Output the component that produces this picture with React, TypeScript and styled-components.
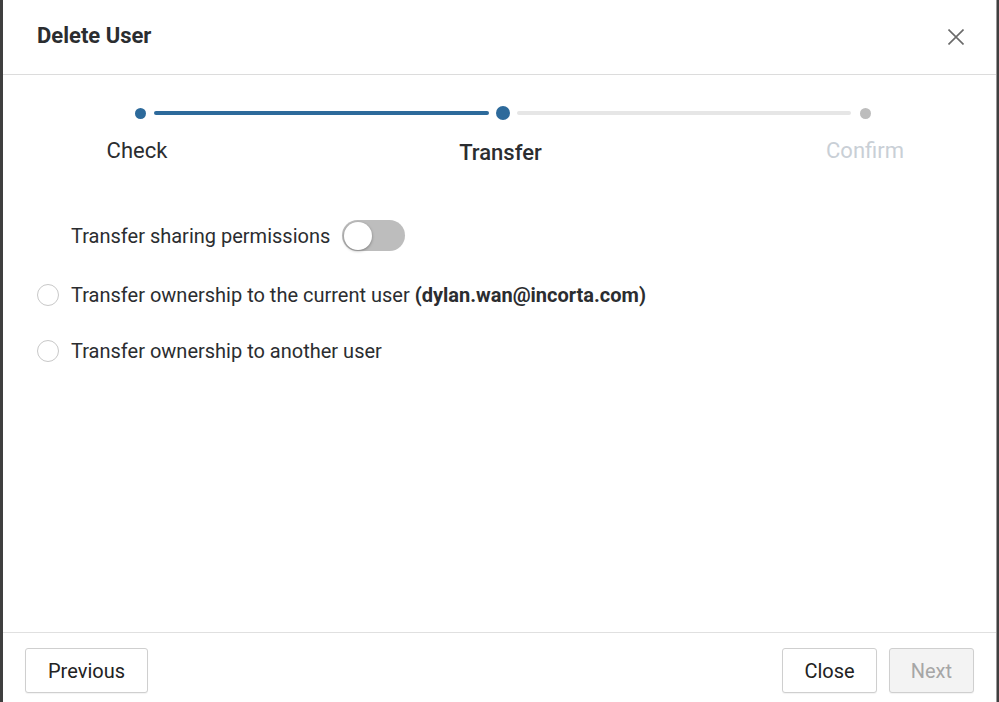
import styled, { createGlobalStyle, css } from 'styled-components'

const GlobalStyle = createGlobalStyle`
  html, body {
    margin: 0;
    padding: 0;
    height: 100%;
    background: #3f3f3f;
    font-family: Roboto, "Noto Sans", Arial, sans-serif;
    color: #2b2d30;
  }
  #root {
    height: 100%;
  }
`

const steps = [
  { label: 'Check', state: 'done' },
  { label: 'Transfer', state: 'active' },
  { label: 'Confirm', state: 'todo' },
]

export default function App() {
  return (
    <>
      <GlobalStyle />
      <Overlay>
        <Modal>
          <Header>
            <Title>Delete User</Title>
            <CloseIcon />
          </Header>

          <Body>
            <Stepper>
              {steps.map((step, i) => (
                <StepGroup key={step.label} $grow={i > 0}>
                  {i > 0 && <Connector $done={step.state !== 'todo'} />}
                  <Step>
                    <Dot $state={step.state} />
                    <StepLabel $state={step.state}>{step.label}</StepLabel>
                  </Step>
                </StepGroup>
              ))}
            </Stepper>

            <Options>
              <ToggleRow>
                <span>Transfer sharing permissions</span>
                <Toggle>
                  <Knob />
                </Toggle>
              </ToggleRow>
              <RadioRow>
                <Radio />
                <span>
                  Transfer ownership to the current user <strong>(dylan.wan@incorta.com)</strong>
                </span>
              </RadioRow>
              <RadioRow>
                <Radio />
                <span>Transfer ownership to another user</span>
              </RadioRow>
            </Options>
          </Body>

          <Footer>
            <Button $pad={22}>Previous</Button>
            <Spacer />
            <Button $pad={21}>Close</Button>
            <Button $pad={21} $disabled>
              Next
            </Button>
          </Footer>
        </Modal>
      </Overlay>
    </>
  )
}

const Overlay = styled.div`
  height: 100%;
  padding-left: 3px;
  box-sizing: border-box;
  display: flex;
`

const Modal = styled.div`
  width: 994px;
  height: 100%;
  background: #fff;
  border-right: 1px solid #9a9a9a;
  box-sizing: border-box;
  display: flex;
  flex-direction: column;
`

const Header = styled.div`
  height: 75px;
  box-sizing: border-box;
  border-bottom: 1px solid #dcdcdc;
  padding: 0 32px 0 34px;
  display: flex;
  align-items: center;
  justify-content: space-between;
`

const Title = styled.h2`
  margin: 0 0 4px;
  font-size: 22px;
  font-weight: 700;
  color: #2b2d30;
`

const Body = styled.div`
  flex: 1;
  display: flex;
  flex-direction: column;
`

const Stepper = styled.div`
  display: flex;
  align-items: flex-start;
  padding: 31px 117px 0 123px;
`

const StepGroup = styled.div<{ $grow: boolean }>`
  display: flex;
  align-items: flex-start;
  ${(p) => p.$grow && 'flex: 1;'}
`

const Step = styled.div`
  width: 28px;
  display: flex;
  flex-direction: column;
  align-items: center;
`

const Connector = styled.div<{ $done: boolean }>`
  flex: 1;
  height: 4px;
  margin-top: 5px;
  border-radius: 2px;
  background: ${(p) => (p.$done ? '#2d6a9b' : '#e6e6e6')};
`

const Dot = styled.div<{ $state: string }>`
  width: ${(p) => (p.$state === 'active' ? 14 : 11)}px;
  height: ${(p) => (p.$state === 'active' ? 14 : 11)}px;
  margin-top: ${(p) => (p.$state === 'active' ? 0 : 1.5)}px;
  border-radius: 50%;
  background: ${(p) => (p.$state === 'todo' ? '#bdbdbd' : '#2d6a9b')};
`

const StepLabel = styled.div<{ $state: string }>`
  white-space: nowrap;
  font-size: 22px;
  line-height: 26px;
  margin-top: 19px;
  ${(p) =>
    p.$state === 'active' &&
    css`
      font-weight: 500;
      margin-top: 20px;
      margin-right: 4px;
    `}
  ${(p) => p.$state === 'done' && 'margin-right: 6px;'}
  color: ${(p) => (p.$state === 'todo' ? '#c9cfd6' : '#2b2d30')};
`

const Options = styled.div`
  display: flex;
  flex-direction: column;
  padding: 54px 0 0 34px;
  font-size: 20px;
  color: #2b2d30;

  strong {
    font-weight: 700;
  }
`

const ToggleRow = styled.div`
  display: flex;
  align-items: center;
  gap: 12px;
  padding-left: 34px;
  height: 31px;
`

const Toggle = styled.div`
  width: 63px;
  height: 31px;
  border-radius: 16px;
  background: #bdbdbd;
  display: flex;
  align-items: center;
  padding: 0 2px;
  box-sizing: border-box;
`

const Knob = styled.div`
  width: 28px;
  height: 28px;
  border-radius: 50%;
  background: #fff;
  box-shadow: 0 1px 3px rgba(0, 0, 0, 0.35);
`

const RadioRow = styled.div`
  display: flex;
  align-items: center;
  gap: 12px;
  height: 24px;
  margin-top: 32px;
`

const Radio = styled.div`
  width: 22px;
  height: 22px;
  border-radius: 50%;
  border: 1px solid #c8c8c8;
  box-sizing: border-box;
  background: #fff;
`

const Footer = styled.div`
  height: 70px;
  box-sizing: border-box;
  border-top: 1px solid #e0e0e0;
  padding: 15px 22px 0 22px;
  display: flex;
  align-items: flex-start;
  gap: 12px;
`

const Spacer = styled.div`
  flex: 1;
`

const Button = styled.button<{ $disabled?: boolean; $pad: number }>`
  height: 45px;
  padding: 0 ${(p) => p.$pad}px;
  font-family: inherit;
  font-size: 20px;
  border-radius: 3px;
  border: 1px solid #cfcfcf;
  background: ${(p) => (p.$disabled ? '#f3f3f3' : '#fff')};
  color: ${(p) => (p.$disabled ? '#a6a6a6' : '#222')};
  box-shadow: 0 1px 1px rgba(0, 0, 0, 0.05);
`

const CloseIcon = () => (
  <svg width="16" height="16" viewBox="0 0 16 16" fill="none" stroke="#6a6a6a" strokeWidth="1.6">
    <path d="M0.5 0.5l15 15M15.5 0.5L0.5 15.5" />
  </svg>
)
